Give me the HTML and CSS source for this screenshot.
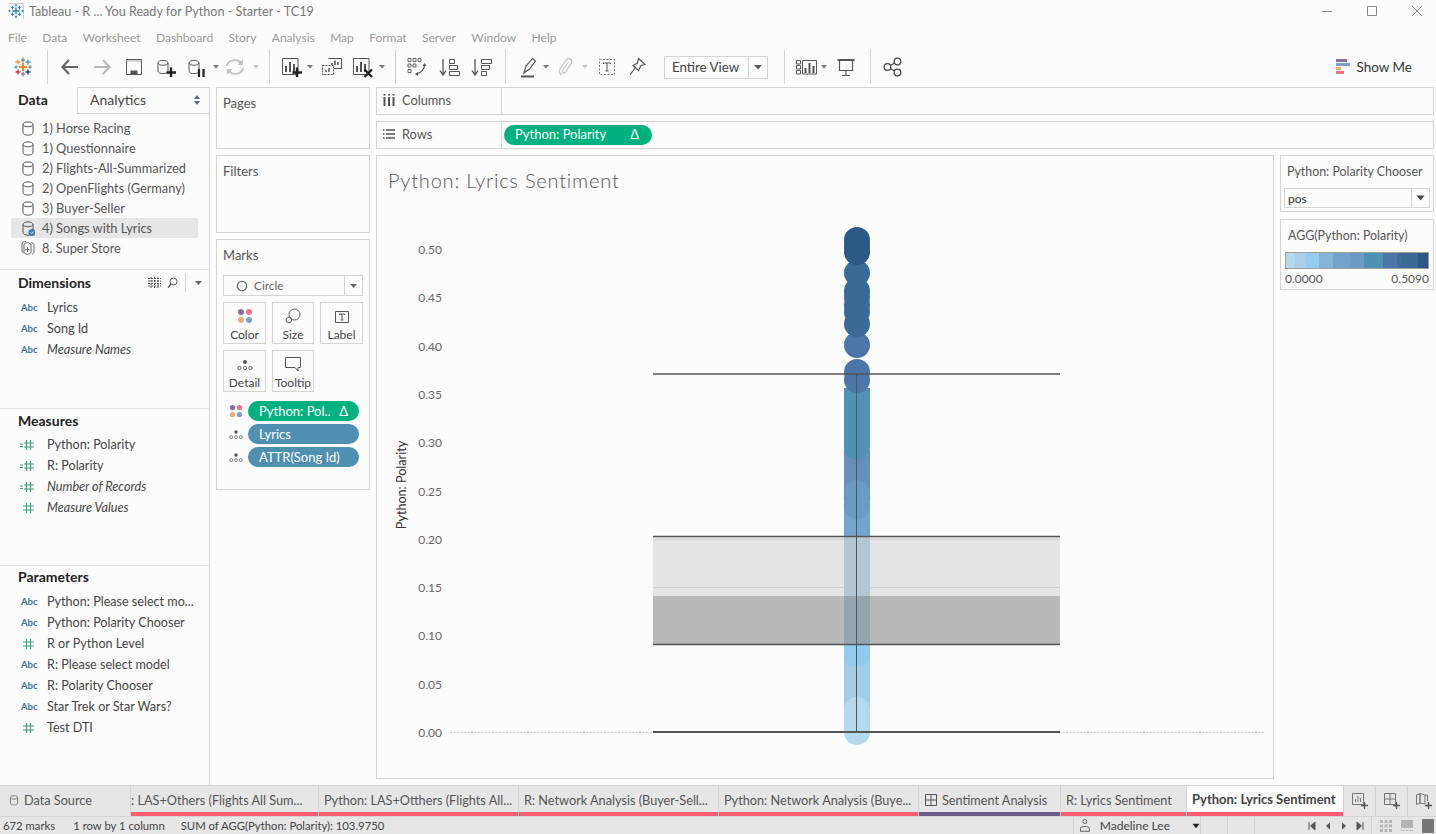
FILE: index.html
```html
<!DOCTYPE html>
<html lang="en">
<head>
    <meta charset="UTF-8">
    <title>Tableau - R ... You Ready for Python - Starter - TC19</title>
    <link rel="stylesheet" href="styles.css">
</head>
<body>
    <svg class="defs" width="0" height="0">
        <symbol id="i-db" viewBox="0 0 14 16">
            <path d="M2 4.500C2 1 12 1 12 4.500V12.500C12 16 2 16 2 12.500ZM2 4.500C2 7.500 12 7.500 12 4.500" fill="none" stroke="#555" stroke-width="1"/>
        </symbol>
        <symbol id="i-hash" viewBox="0 0 16 14">
            <path d="M6.500 2V12M10.500 2V12M3 5H14M3 9H14" fill="none" stroke="#3f9e7f" stroke-width="1.200"/>
        </symbol>
        <symbol id="i-mhash" viewBox="0 0 16 14">
            <path d="M6.500 2V12M10.500 2V12M4 5H14M4 9H14" fill="none" stroke="#3f9e7f" stroke-width="1.200"/>
            <path d="M0 6H3M0 8.500H3" fill="none" stroke="#3f9e7f" stroke-width="1"/>
        </symbol>
        <symbol id="i-detail" viewBox="0 0 16 12">
            <circle cx="8" cy="3" r="2" fill="#555"/>
            <circle cx="2.500" cy="9" r="1.700" fill="none" stroke="#555" stroke-width=".8"/>
            <circle cx="8" cy="9" r="1.700" fill="none" stroke="#555" stroke-width=".8"/>
            <circle cx="13.500" cy="9" r="1.700" fill="none" stroke="#555" stroke-width=".8"/>
        </symbol>
        <symbol id="i-dots" viewBox="0 0 16 16">
            <circle cx="4" cy="4" r="3" fill="#8b6c9e"/>
            <circle cx="12" cy="4" r="3" fill="#f56f85"/>
            <circle cx="4" cy="12" r="3" fill="#edae6c"/>
            <circle cx="12" cy="12" r="3" fill="#7f9fcb"/>
        </symbol>
        <symbol id="i-bars" viewBox="0 0 24 24">
            <path d="M3.500 3.500H19V19.500H3.500Z" fill="none" stroke="#555"/>
            <path d="M7 11V17M11 7V17M15 9V17" fill="none" stroke="#555" stroke-width="2"/>
        </symbol>
    </svg>

    <header class="titlebar">
        <svg class="app-icon" width="18" height="18" viewBox="0 0 18 18">
            <path d="M1.500 1.500H16.500V16.500" fill="none" stroke="#cfcfcf"/>
            <path d="M9 5.500V12.500M5.500 9H12.500" fill="none" stroke="#2f83b0" stroke-width="1.300"/>
            <path d="M5.500 4V7.500M3.800 5.700H7.200M12.500 4V7.500M10.800 5.700H14.200M5.500 10.500V14M3.800 12.300H7.200M12.500 10.500V14M10.800 12.300H14.200M9 2V4.500M7.800 3.200H10.200M9 13.500V16M7.800 14.800H10.200M2.500 7.800V10.200M1.300 9H3.700M15.500 7.800V10.200M14.300 9H16.700" fill="none" stroke="#2f83b0"/>
        </svg>
        <span class="app-title">Tableau - R ... You Ready for Python - Starter - TC19</span>
        <div class="win-btns">
            <svg width="12" height="12" viewBox="0 0 12 12"><path d="M1 6.500H11" stroke="#888"/></svg>
            <svg width="12" height="12" viewBox="0 0 12 12"><path d="M1.500 1.500H10.500V10.500H1.500Z" fill="none" stroke="#888"/></svg>
            <svg width="12" height="12" viewBox="0 0 12 12"><path d="M1 1L11 11M11 1L1 11" stroke="#888"/></svg>
        </div>
    </header>

    <nav class="menubar">
        <span>File</span><span>Data</span><span>Worksheet</span><span>Dashboard</span><span>Story</span><span>Analysis</span><span>Map</span><span>Format</span><span>Server</span><span>Window</span><span>Help</span>
    </nav>

    <div class="toolbar">
        <svg class="tool ml11" viewBox="0 0 24 24">
            <path d="M8 12H16M12 8V16" stroke="#ee8a2c" stroke-width="2"/>
            <path d="M12 2.500V7.500M10 5H14" stroke="#6f8ea8" stroke-width="1.300"/>
            <path d="M7 4.500V9.500M4.500 7H9.500" stroke="#ee9a3c" stroke-width="1.300"/>
            <path d="M17 4.500V9.500M14.500 7H19.500" stroke="#4e92c4" stroke-width="1.300"/>
            <path d="M5 10.500V13.500M3.500 12H6.500" stroke="#4e92c4" stroke-width="1.300"/>
            <path d="M19 10.500V13.500M17.500 12H20.500" stroke="#6f7f9c" stroke-width="1.300"/>
            <path d="M7 14.500V19.500M4.500 17H9.500" stroke="#d8344c" stroke-width="1.500"/>
            <path d="M12 16.500V21.500M10 19H14" stroke="#6f8ea8" stroke-width="1.300"/>
            <path d="M17 14.500V19.500M14.500 17H19.500" stroke="#1f4a78" stroke-width="1.500"/>
        </svg>
        <i class="sep ml12"></i>
        <svg class="tool ml10" viewBox="0 0 24 24"><path d="M4.500 12H20M11 5L4.500 12L11 19" fill="none" stroke="#666" stroke-width="2.200"/></svg>
        <svg class="tool ml8" viewBox="0 0 24 24"><path d="M4 12H19.500M13 5L19.500 12L13 19" fill="none" stroke="#bbb" stroke-width="2.200"/></svg>
        <svg class="tool ml8" viewBox="0 0 24 24"><path d="M4.500 4.500H19.500V19.500H4.500Z" fill="none" stroke="#555"/><path d="M4.500 6H19.500" stroke="#aaa"/><path d="M8.500 15.500H15.500V19.500H8.500Z" fill="#555"/></svg>
        <svg class="tool ml8" viewBox="0 0 24 24"><use href="#i-db" x="2" y="3" width="14" height="17"/><path d="M17 12.500V22M12.500 17.500H22" stroke="#222" stroke-width="2.400"/></svg>
        <svg class="tool ml6" viewBox="0 0 24 24"><use href="#i-db" x="3" y="3" width="14" height="17"/><path d="M15 14V22M19.500 14V22" stroke="#222" stroke-width="2.200"/></svg>
        <svg class="caret ml3" viewBox="0 0 10 6"><path d="M2 1H8L5 4.500Z" fill="#777"/></svg>
        <svg class="tool ml2" viewBox="0 0 24 24"><path d="M4 11C5 5 14 3 18 8M20 13C19 19 10 21 6 16" fill="none" stroke="#c4c4c4" stroke-width="2"/><path d="M20 4V10H14.500M4 20V14H9.500" fill="#c4c4c4"/></svg>
        <svg class="caret ml4" viewBox="0 0 10 6"><path d="M2 1H8L5 4.500Z" fill="#c4c4c4"/></svg>
        <i class="sep ml8"></i>
        <svg class="tool ml9" viewBox="0 0 24 24"><use href="#i-bars"/><path d="M18 12.500V22M13.500 17.500H23" stroke="#222" stroke-width="2.400"/></svg>
        <svg class="caret ml2" viewBox="0 0 10 6"><path d="M2 1H8L5 4.500Z" fill="#777"/></svg>
        <svg class="tool ml5" viewBox="0 0 24 24"><path d="M8.500 3.500H21.500V13.500H14" fill="#fcfcfc" stroke="#555"/><path d="M12 10V8M15 10V5.500M18 10V7" stroke="#555" stroke-width="1.600"/><path d="M2.500 10.500H13.500V19.500H2.500Z" fill="none" stroke="#555" stroke-dasharray="2 1"/><path d="M6 17V15M9 17V13" stroke="#555" stroke-width="1.500"/></svg>
        <svg class="tool ml6" viewBox="0 0 24 24"><use href="#i-bars"/><path d="M14.500 14.500L22 22M22 14.500L14.500 22" stroke="#222" stroke-width="2.400"/></svg>
        <svg class="caret ml3" viewBox="0 0 10 6"><path d="M2 1H8L5 4.500Z" fill="#777"/></svg>
        <i class="sep ml8"></i>
        <svg class="tool ml9" viewBox="0 0 24 24"><path d="M3 3.500H6V6.500H3ZM8 3.500H11V6.500H8ZM13 3.500H16V6.500H13ZM3 9H6V12H3ZM3 14.500H6V17.500H3ZM8 9H11V12H8Z" fill="none" stroke="#555" stroke-width=".9"/><path d="M19.500 9C20 14 16 18.500 11 19" fill="none" stroke="#555" stroke-width="1.100"/><path d="M17.500 11L19.500 8L21.500 11ZM13 17L10 19L13 21Z" fill="#555"/></svg>
        <svg class="tool ml8" viewBox="0 0 24 24"><path d="M6 4V19M3 15.500L6 20L9 15.500" fill="none" stroke="#555" stroke-width="1.300"/><path d="M12.500 4.500H17.500V8.500H12.500ZM12.500 10.500H20.500V14.500H12.500ZM12.500 16.500H22.500V20.500H12.500Z" fill="none" stroke="#555"/></svg>
        <svg class="tool ml8" viewBox="0 0 24 24"><path d="M6 4V19M3 15.500L6 20L9 15.500" fill="none" stroke="#555" stroke-width="1.300"/><path d="M12.500 4.500H22.500V8.500H12.500ZM12.500 10.500H20.500V14.500H12.500ZM12.500 16.500H17.500V20.500H12.500Z" fill="none" stroke="#555"/></svg>
        <i class="sep ml12"></i>
        <svg class="tool ml11" viewBox="0 0 24 24"><path d="M7 18L9 11L15.500 3.500L18.500 6L12.500 14Z" fill="none" stroke="#555" stroke-width="1.200"/><path d="M4 21.500H17" stroke="#555" stroke-width="2"/></svg>
        <svg class="caret" viewBox="0 0 10 6"><path d="M2 1H8L5 4.500Z" fill="#777"/></svg>
        <svg class="tool ml2" viewBox="0 0 24 24"><path d="M9 20C6 19 6 16 7 14L13 5C15 2 20 4 18.500 8L12.500 17C11 19 8.500 17.500 9.500 15.500L14.500 8" fill="none" stroke="#c4c4c4" stroke-width="1.300"/></svg>
        <svg class="caret ml3" viewBox="0 0 10 6"><path d="M2 1H8L5 4.500Z" fill="#c4c4c4"/></svg>
        <svg class="tool ml5" viewBox="0 0 24 24"><path d="M4.500 4.500H19.500V19.500H4.500Z" fill="none" stroke="#777" stroke-dasharray="2 1.500"/><path d="M8.500 9V8H15.500V9M12 8V16M10.500 16H13.500" fill="none" stroke="#555"/></svg>
        <svg class="tool ml6" viewBox="0 0 24 24"><path d="M13.500 3.500L20 9.500L16 10.500L13.500 15.500L8 10.500L12.500 8ZM10 13L5 20" fill="none" stroke="#555" stroke-width="1.200"/></svg>
        <div class="view-select ml15"><span>Entire View</span><b><svg width="10" height="6" viewBox="0 0 10 6"><path d="M1 1H9L5 5.500Z" fill="#555"/></svg></b></div>
        <i class="sep ml16"></i>
        <svg class="tool ml10" viewBox="0 0 24 24"><path d="M1.500 5.500H5.500V9H1.500ZM1.500 10.500H5.500V14H1.500ZM1.500 15.500H5.500V19H1.500ZM7.500 5.500H21.500V19H7.500Z" fill="none" stroke="#555"/><path d="M10.500 18V13M14.500 18V8M18.500 18V11" stroke="#555" stroke-width="2"/></svg>
        <svg class="caret" viewBox="0 0 10 6"><path d="M2 1H8L5 4.500Z" fill="#777"/></svg>
        <svg class="tool ml5" viewBox="0 0 24 24"><path d="M4 5.500H20M5.500 5.500V15.500H18.500V5.500M12 15.500V20.500M8 20.500H16" fill="none" stroke="#555" stroke-width="1.200"/><path d="M3.500 5H20.500" stroke="#555" stroke-width="2"/></svg>
        <i class="sep ml12"></i>
        <svg class="tool ml10" viewBox="0 0 24 24"><circle cx="6.500" cy="12" r="3.300" fill="none" stroke="#444" stroke-width="1.300"/><circle cx="16.500" cy="6.500" r="3.300" fill="none" stroke="#444" stroke-width="1.300"/><circle cx="16.500" cy="17.500" r="3.300" fill="none" stroke="#444" stroke-width="1.300"/><path d="M9.500 10.500L13.500 8M9.500 13.500L13.500 16" stroke="#444" stroke-width="1.300"/></svg>
        <div class="show-me">
            <svg width="14" height="16" viewBox="0 0 14 16"><path d="M0 0H11V3H0Z" fill="#8b6c9e"/><path d="M0 4H14V7H0Z" fill="#7f9fcb"/><path d="M0 8H5V11H0Z" fill="#edae6c"/><path d="M0 12H8V15H0Z" fill="#f56f85"/></svg>
            <span>Show Me</span>
        </div>
    </div>

    <main class="workspace">
        <aside class="sidebar">
            <div class="side-tabs">
                <div class="side-tab active">Data</div>
                <div class="side-tab">Analytics
                    <svg class="updown" width="8" height="12" viewBox="0 0 8 12"><path d="M4 1L7 5H1ZM4 11L1 7H7Z" fill="#5a6b80"/></svg>
                </div>
            </div>
            <ul class="sources">
                <li><svg class="src-ico" viewBox="0 0 14 16"><use href="#i-db"/></svg>1) Horse Racing</li>
                <li><svg class="src-ico" viewBox="0 0 14 16"><use href="#i-db"/></svg>1) Questionnaire</li>
                <li><svg class="src-ico" viewBox="0 0 14 16"><use href="#i-db"/></svg>2) Flights-All-Summarized</li>
                <li><svg class="src-ico" viewBox="0 0 14 16"><use href="#i-db"/></svg>2) OpenFlights (Germany)</li>
                <li><svg class="src-ico" viewBox="0 0 14 16"><use href="#i-db"/></svg>3) Buyer-Seller</li>
                <li class="selected"><svg class="src-ico" viewBox="0 0 14 16"><use href="#i-db"/><circle cx="11" cy="12.500" r="3.500" fill="#3b7bb0"/><path d="M9.500 12.500L10.700 13.700L12.700 11.500" fill="none" stroke="#fff"/></svg>4) Songs with Lyrics</li>
                <li><svg class="src-ico" viewBox="0 0 14 16"><path d="M3 5C3 2 10 2 10 5V12C10 15 3 15 3 12ZM1 4C1 2 3 1.500 5 1.500M1 4V11C1 12 1.500 12.500 2.500 13M13 5C13 3.500 12 3 10.500 2.500M13 5V12C13 13 12 14 11 14.500M6.500 7V12M4.500 9.500H8.500" fill="none" stroke="#555" stroke-width=".9"/></svg>8. Super Store</li>
            </ul>

            <section class="field-group dims">
                <h3>Dimensions
                    <span class="head-tools">
                        <svg class="grid-ico" width="13" height="11" viewBox="0 0 13 11"><path d="M0 1.500H13M0 4H13M0 6.500H13M0 9H13M3 0V11M6.500 0V11M10 0V11" stroke="#555" stroke-dasharray="2 1" fill="none"/></svg>
                        <svg width="11" height="11" viewBox="0 0 11 11"><circle cx="6.500" cy="4.500" r="3.500" fill="none" stroke="#555"/><path d="M4 7L1 10.500" stroke="#555" stroke-width="1.300"/></svg>
                        <i class="head-sep"></i>
                        <svg width="9" height="6" viewBox="0 0 9 6"><path d="M1 1H8L4.500 5Z" fill="#666"/></svg>
                    </span>
                </h3>
                <div class="field"><span class="abc">Abc</span>Lyrics</div>
                <div class="field"><span class="abc">Abc</span>Song Id</div>
                <div class="field calc"><span class="abc">Abc</span>Measure Names</div>
            </section>

            <section class="field-group meas">
                <h3>Measures</h3>
                <div class="field"><svg class="num" viewBox="0 0 16 14"><use href="#i-mhash"/></svg>Python: Polarity</div>
                <div class="field"><svg class="num" viewBox="0 0 16 14"><use href="#i-mhash"/></svg>R: Polarity</div>
                <div class="field calc"><svg class="num" viewBox="0 0 16 14"><use href="#i-mhash"/></svg>Number of Records</div>
                <div class="field calc"><svg class="num" viewBox="0 0 16 14"><use href="#i-hash"/></svg>Measure Values</div>
            </section>

            <section class="field-group params">
                <h3>Parameters</h3>
                <div class="field"><span class="abc">Abc</span>Python: Please select mo...</div>
                <div class="field"><span class="abc">Abc</span>Python: Polarity Chooser</div>
                <div class="field"><svg class="num" viewBox="0 0 16 14"><use href="#i-hash"/></svg>R or Python Level</div>
                <div class="field"><span class="abc">Abc</span>R: Please select model</div>
                <div class="field"><span class="abc">Abc</span>R: Polarity Chooser</div>
                <div class="field"><span class="abc">Abc</span>Star Trek or Star Wars?</div>
                <div class="field"><svg class="num" viewBox="0 0 16 14"><use href="#i-hash"/></svg>Test DTI</div>
            </section>
        </aside>

        <div class="cards-col">
            <div class="card pages">Pages</div>
            <div class="card filters">Filters</div>
            <div class="card marks">
                <div class="marks-title">Marks</div>
                <div class="mark-type">
                    <svg width="12" height="12" viewBox="0 0 12 12"><circle cx="6" cy="6" r="4.700" fill="none" stroke="#555" stroke-width="1.100"/></svg>
                    <span>Circle</span>
                    <b><svg width="9" height="6" viewBox="0 0 9 6"><path d="M1 1H8L4.500 5Z" fill="#666"/></svg></b>
                </div>
                <div class="mark-btns">
                    <div class="mark-btn"><svg width="16" height="16"><use href="#i-dots"/></svg>Color</div>
                    <div class="mark-btn"><svg width="16" height="16" viewBox="0 0 16 16"><circle cx="9.500" cy="6.500" r="5.500" fill="none" stroke="#555"/><circle cx="3.800" cy="12" r="2.800" fill="#fcfcfc" stroke="#555"/></svg>Size</div>
                    <div class="mark-btn"><svg width="14" height="14" viewBox="0 0 14 14"><path d="M.5 1.500H13.500V12.500H.5Z" fill="none" stroke="#555"/><path d="M4.500 5V4H9.500V5M7 4V10M5.500 10H8.500" fill="none" stroke="#555"/></svg>Label</div>
                    <div class="mark-btn"><svg width="16" height="14" viewBox="0 0 16 14"><use href="#i-detail" y="1" width="16" height="12"/></svg>Detail</div>
                    <div class="mark-btn"><svg width="16" height="16" viewBox="0 0 16 16"><path d="M.5 1.500H15.500V11.500H13V15L10 11.500H.5Z" fill="none" stroke="#555"/></svg>Tooltip</div>
                </div>
                <div class="mark-pill">
                    <svg width="14" height="14"><use href="#i-dots" width="14" height="14"/></svg>
                    <div class="pill green"><span>Python: Pol..</span><em>&#916;</em></div>
                </div>
                <div class="mark-pill">
                    <svg width="14" height="11"><use href="#i-detail" width="14" height="11"/></svg>
                    <div class="pill blue"><span>Lyrics</span></div>
                </div>
                <div class="mark-pill">
                    <svg width="14" height="11"><use href="#i-detail" width="14" height="11"/></svg>
                    <div class="pill blue"><span>ATTR(Song Id)</span></div>
                </div>
            </div>
        </div>

        <div class="view-col">
            <div class="shelf">
                <div class="shelf-label">
                    <svg width="12" height="12" viewBox="0 0 12 12"><path d="M1.500 3V12M6 3V12M10.500 3V12M1.500 0V1.500M6 0V1.500M10.500 0V1.500" stroke="#555" stroke-width="2"/></svg>
                    Columns
                </div>
                <div class="shelf-body"></div>
            </div>
            <div class="shelf">
                <div class="shelf-label">
                    <svg width="12" height="12" viewBox="0 0 12 12"><path d="M3 2H12M3 6H12M3 10H12M0 2H1.500M0 6H1.500M0 10H1.500" stroke="#555" stroke-width="1.500"/></svg>
                    Rows
                </div>
                <div class="shelf-body"><div class="pill green row-pill"><span>Python: Polarity</span><em>&#916;</em></div></div>
            </div>

            <div class="view-body">
                <div class="card chart-card">
                    <div class="chart-title">Python: Lyrics Sentiment</div>
                    <svg class="chart" width="896" height="574" viewBox="377 204 896 574">
                        <g class="ticks">
                            <text x="442" y="254">0.50</text>
                            <text x="442" y="302">0.45</text>
                            <text x="442" y="351">0.40</text>
                            <text x="442" y="399">0.35</text>
                            <text x="442" y="447">0.30</text>
                            <text x="442" y="496">0.25</text>
                            <text x="442" y="544">0.20</text>
                            <text x="442" y="592">0.15</text>
                            <text x="442" y="640">0.10</text>
                            <text x="442" y="689">0.05</text>
                            <text x="442" y="737">0.00</text>
                        </g>
                        <text class="axis-label" transform="translate(406 485) rotate(-90)">Python: Polarity</text>
                        <path d="M450 732.500H1264" stroke="#ccc" stroke-dasharray="2 1.500"/>

                        <!-- reference bands -->
                        <rect x="653" y="536" width="407" height="60" fill="#e5e5e5"/>
                        <rect x="653" y="596" width="407" height="48" fill="#b9b9b9"/>
                        <path d="M653 539.500H1060M653 587.500H1060" stroke="#d0d0d0"/>

                        <!-- marks, bottom of the axis first -->
                        <rect x="844" y="536" width="26" height="60" fill="#b3c6d3"/>
                        <rect x="844" y="596" width="26" height="48" fill="#95a5af"/>
                        <rect x="844" y="644" width="26" height="66" fill="#a3cce6"/>
                        <path d="M844 644H870V655A13 13 0 0 1 844 655Z" fill="#91cbee"/>
                        <circle cx="857" cy="679" r="13" fill="#a3cce6"/>
                        <rect x="844" y="710" width="26" height="22" fill="#b5daf0"/>
                        <circle cx="857" cy="710" r="13" fill="#b5daf0"/>
                        <circle cx="857" cy="732" r="13" fill="#b5daf0"/>

                        <rect x="844" y="500" width="26" height="36" fill="#74a5cf"/>
                        <rect x="844" y="450" width="26" height="50" fill="#6690b8"/>
                        <circle cx="857" cy="493" r="13" fill="#6b9ac4"/>
                        <circle cx="857" cy="506" r="13" fill="#6b9ac4"/>
                        <rect x="844" y="388" width="26" height="59" fill="#4f92b4"/>
                        <circle cx="857" cy="447" r="13" fill="#4f92b4"/>
                        <circle cx="857" cy="372" r="13" fill="#4b76a7"/>
                        <circle cx="857" cy="380" r="13" fill="#4b76a7"/>
                        <circle cx="857" cy="345" r="13" fill="#4b76a7"/>
                        <circle cx="857" cy="273" r="13" fill="#3a6b96"/>
                        <circle cx="857" cy="291" r="13" fill="#3a6b96"/>
                        <circle cx="857" cy="297" r="13" fill="#3a6b96"/>
                        <circle cx="857" cy="305" r="13" fill="#3a6b96"/>
                        <circle cx="857" cy="312" r="13" fill="#3a6b96"/>
                        <circle cx="857" cy="324" r="13" fill="#3a6b96"/>
                        <circle cx="857" cy="240" r="13" fill="#2b5a87"/>
                        <circle cx="857" cy="246" r="13" fill="#2b5a87"/>
                        <circle cx="857" cy="252" r="13" fill="#2b5a87"/>

                        <!-- box plot lines -->
                        <path d="M856.500 374V732" stroke="#555"/>
                        <path d="M653 374H1060" stroke="#555" stroke-width="1.600"/>
                        <path d="M653 536.500H1060M653 644.500H1060" stroke="#555" stroke-width="1.300"/>
                        <path d="M653 732H1060" stroke="#555" stroke-width="2"/>
                    </svg>
                </div>

                <div class="legend-col">
                    <div class="card chooser">
                        <div class="legend-title">Python: Polarity Chooser</div>
                        <div class="param-select">
                            <span>pos</span>
                            <b><svg width="9" height="6" viewBox="0 0 9 6"><path d="M.5 .5H8.500L4.500 5.500Z" fill="#444"/></svg></b>
                        </div>
                    </div>
                    <div class="card color-legend">
                        <div class="legend-title">AGG(Python: Polarity)</div>
                        <div class="ramp"></div>
                        <div class="ramp-labels"><span>0.0000</span><span>0.5090</span></div>
                    </div>
                </div>
            </div>
        </div>
    </main>

    <div class="tabbar">
        <div class="tab source">
            <svg width="10" height="14" viewBox="0 0 14 16"><use href="#i-db"/></svg>
            Data Source
        </div>
        <div class="tab w187 clip"><span>: LAS+Others (Flights All Sum...</span></div>
        <div class="tab w200"><span>Python: LAS+Otthers (Flights All...</span></div>
        <div class="tab w200"><span>R: Network Analysis (Buyer-Sell...</span></div>
        <div class="tab w200"><span>Python: Network Analysis (Buye...</span></div>
        <div class="tab w142 dash">
            <svg width="12" height="12" viewBox="0 0 12 12"><path d="M.5 .5H11.500V11.500H.5ZM6 .5V11.500M.5 6H11.500" fill="none" stroke="#555"/></svg>
            <span>Sentiment Analysis</span>
        </div>
        <div class="tab w126"><span>R: Lyrics Sentiment</span></div>
        <div class="tab w157 current"><span>Python: Lyrics Sentiment</span></div>
        <div class="tab-add"><svg width="18" height="18" viewBox="0 0 18 18"><path d="M1.500 1.500H12.500V12.500H1.500Z" fill="none" stroke="#777"/><path d="M4.500 10V7M7 10V4M9.500 10V6" stroke="#777"/><path d="M13.500 10V17M10 13.500H17" stroke="#555" stroke-width="1.400"/></svg></div>
        <div class="tab-add"><svg width="18" height="18" viewBox="0 0 18 18"><path d="M1.500 1.500H12.500V12.500H1.500ZM7 1.500V12.500M1.500 7H12.500" fill="none" stroke="#777"/><path d="M13.500 10V17M10 13.500H17" stroke="#555" stroke-width="1.400"/></svg></div>
        <div class="tab-add"><svg width="18" height="18" viewBox="0 0 18 18"><path d="M1.500 3L5 1.500V11L1.500 12.500ZM5 1.500L10 3V12L5 11ZM10 3H12.500V9" fill="none" stroke="#777"/><path d="M13.500 10V17M10 13.500H17" stroke="#555" stroke-width="1.400"/></svg></div>
    </div>

    <footer class="statusbar">
        <span class="stat s1">672 marks</span>
        <span class="stat s2">1 row by 1 column</span>
        <span class="stat">SUM of AGG(Python: Polarity): 103.9750</span>
        <div class="status-right">
            <div class="user">
                <svg width="11" height="15" viewBox="0 0 11 15"><circle cx="5.500" cy="3" r="2.300" fill="none" stroke="#555"/><path d="M.5 14V10.500C.5 8 10.500 8 10.500 10.500V14Z" fill="none" stroke="#555"/></svg>
                <span>Madeline Lee</span>
                <svg class="user-caret" width="9" height="6" viewBox="0 0 9 6"><path d="M.5 .5H8.500L4.500 5.500Z" fill="#222"/></svg>
            </div>
            <i class="st-cell"></i>
            <i class="st-cell"></i>
            <div class="pager">
                <svg width="8" height="10" viewBox="0 0 8 10"><path d="M1 1V9M7 1V9L2.500 5Z" stroke="#555" fill="#555"/></svg>
                <svg width="8" height="10" viewBox="0 0 8 10"><path d="M6 1.500V8.500L2 5Z" fill="#555"/></svg>
                <svg width="8" height="10" viewBox="0 0 8 10"><path d="M2 1.500V8.500L6 5Z" fill="#555"/></svg>
                <svg width="8" height="10" viewBox="0 0 8 10"><path d="M7 1V9M1 1V9L5.500 5Z" stroke="#555" fill="#555"/></svg>
            </div>
            <div class="zoomers">
                <svg width="12" height="12" viewBox="0 0 12 12"><path d="M0 1.500H12M0 6H12M0 10.500H12" stroke="#b5b5b5" stroke-width="3" stroke-dasharray="3 1.500"/></svg>
                <svg width="12" height="12" viewBox="0 0 12 12"><path d="M0 0H12V8H0Z" fill="#b5b5b5"/><path d="M0 10.500H12" stroke="#b5b5b5" stroke-dasharray="3 1.500"/></svg>
                <svg width="12" height="14" viewBox="0 0 12 14"><path d="M0 0H12V14H0Z" fill="#777"/></svg>
            </div>
        </div>
    </footer>
</body>
</html>
```

FILE: styles.css
```css
* {
    box-sizing: border-box;
}
html, body {
    height: 100%;
}
body {
    margin: 0;
    width: 1436px;
    height: 834px;
    overflow: hidden;
    display: flex;
    flex-direction: column;
    background: #fcfcfc;
    color: #333;
    font-family: Lato, "Open Sans", sans-serif;
    font-size: 13px;
}
.defs {
    position: absolute;
}
h3 {
    margin: 0;
}

/* window chrome */
.titlebar {
    height: 22px;
    display: flex;
    align-items: center;
    padding-left: 7px;
    flex: none;
}
.app-icon {
    margin-right: 4px;
}
.app-title {
    color: #777;
    font-size: 12.6px;
}
.win-btns {
    margin-left: auto;
    display: flex;
    gap: 33px;
    padding-right: 13px;
}
.menubar {
    height: 26px;
    display: flex;
    align-items: center;
    gap: 15.4px;
    padding: 4px 0 0 8px;
    color: #9a9a9a;
    font-size: 12px;
    flex: none;
}

/* toolbar */
.toolbar {
    height: 39px;
    display: flex;
    align-items: center;
    padding-bottom: 1px;
    flex: none;
}
.tool {
    width: 24px;
    height: 24px;
    flex: none;
}
.caret {
    width: 10px;
    height: 6px;
    flex: none;
}
.sep {
    width: 1px;
    height: 34px;
    background: #d4d4d4;
    flex: none;
}
.ml2 { margin-left: 2px; }
.ml3 { margin-left: 3px; }
.ml4 { margin-left: 4px; }
.ml5 { margin-left: 5px; }
.ml6 { margin-left: 6px; }
.ml8 { margin-left: 8px; }
.ml9 { margin-left: 9px; }
.ml10 { margin-left: 10px; }
.ml11 { margin-left: 11px; }
.ml12 { margin-left: 12px; }
.ml15 { margin-left: 15px; }
.ml16 { margin-left: 16px; }
.view-select {
    width: 104px;
    height: 23px;
    border: 1px solid #d4d4d4;
    display: flex;
    align-items: center;
    padding-left: 7px;
    font-size: 13.3px;
    color: #444;
    flex: none;
}
.view-select span {
    padding-bottom: 1px;
}
.view-select b {
    margin-left: auto;
    width: 19px;
    height: 100%;
    border-left: 1px solid #d4d4d4;
    display: flex;
    align-items: center;
    justify-content: center;
}
.show-me {
    margin-left: auto;
    padding-right: 24px;
    display: flex;
    align-items: center;
    gap: 6px;
    font-size: 13.5px;
}

/* main area */
.workspace {
    flex: 1;
    min-height: 0;
    display: flex;
}
.sidebar {
    width: 210px;
    border-right: 1px solid #d4d4d4;
    display: flex;
    flex-direction: column;
    flex: none;
}
.side-tabs {
    height: 27px;
    display: flex;
    flex: none;
}
.side-tab {
    display: flex;
    align-items: center;
    font-size: 14px;
    color: #444;
    flex: 1;
    padding: 0 0 2px 12px;
    border-left: 1px solid #d4d4d4;
    border-top: 1px solid #d4d4d4;
    border-bottom: 1px solid #d4d4d4;
}
.side-tab.active {
    flex: 0 0 77px;
    padding-left: 18px;
    font-weight: 700;
    color: #222;
    border: 0;
}
.updown {
    margin-left: auto;
    margin-right: 8px;
}
.sources {
    list-style: none;
    margin: 0;
    padding: 4px 0 0 11px;
    height: 155px;
    flex: none;
}
.sources li {
    width: 187px;
    height: 20px;
    display: flex;
    align-items: center;
    color: #555;
    font-size: 12.8px;
}
.sources li.selected {
    background: #e6e6e6;
}
.src-ico {
    width: 14px;
    height: 16px;
    margin: 0 7px 0 10px;
    flex: none;
}
.field-group {
    border-top: 1px solid #e4e4e4;
    flex: none;
}
.field-group h3 {
    display: flex;
    align-items: center;
    padding-left: 18px;
    font-size: 14px;
    font-weight: 700;
    color: #222;
}
.dims {
    height: 139px;
}
.dims h3 {
    height: 27px;
    padding-bottom: 2px;
}
.meas {
    height: 157px;
}
.meas h3 {
    height: 25px;
    padding-bottom: 2px;
}
.params h3 {
    height: 25px;
    padding-bottom: 4px;
}
.head-tools {
    margin-left: auto;
    display: flex;
    align-items: center;
    gap: 7px;
    padding-right: 6px;
}
.grid-ico {
    margin-right: -1px;
}
.head-sep {
    width: 1px;
    height: 18px;
    background: #d4d4d4;
    margin-right: 1px;
}
.field {
    height: 21px;
    display: flex;
    align-items: center;
    color: #444;
    font-size: 12.6px;
}
.field.calc {
    font-style: italic;
}
.abc {
    width: 47px;
    padding-left: 21px;
    color: #3d7199;
    font-size: 9.5px;
    font-weight: 700;
    font-style: normal;
    flex: none;
}
.num {
    width: 16px;
    height: 14px;
    margin: 0 11px 0 20px;
    flex: none;
}

/* pages, filters, marks */
.cards-col {
    width: 154px;
    margin-left: 6px;
    display: flex;
    flex-direction: column;
    gap: 6px;
    flex: none;
}
.card {
    border: 1px solid #d4d4d4;
    background: #fcfcfc;
}
.pages {
    height: 62px;
    padding: 7px 6px;
    color: #555;
}
.filters {
    height: 78px;
    padding: 7px 6px;
    color: #555;
}
.marks {
    height: 251px;
    padding: 0 6px;
}
.marks-title {
    height: 35px;
    padding-top: 7px;
    color: #555;
}
.mark-type {
    height: 21px;
    border: 1px solid #d4d4d4;
    display: flex;
    align-items: center;
    padding-left: 12px;
    color: #666;
    font-size: 11.8px;
}
.mark-type span {
    margin-left: 6px;
}
.mark-type b {
    margin-left: auto;
    width: 18px;
    height: 100%;
    border-left: 1px solid #d4d4d4;
    display: flex;
    align-items: center;
    justify-content: center;
}
.mark-btns {
    display: grid;
    grid-template-columns: 43px 42px 43px;
    grid-auto-rows: 42px;
    gap: 6px;
    margin: 6px 0 9px;
}
.mark-btn {
    border: 1px solid #d4d4d4;
    display: flex;
    flex-direction: column;
    align-items: center;
    justify-content: flex-end;
    gap: 3px;
    padding-bottom: 1px;
    font-size: 12px;
    color: #444;
}
.mark-pill {
    display: flex;
    align-items: center;
    justify-content: space-between;
    height: 20px;
    margin-bottom: 3px;
    padding-left: 6px;
    margin-right: 4px;
}
.pill {
    height: 20px;
    width: 111px;
    border-radius: 10px;
    display: flex;
    align-items: center;
    padding: 0 11px;
    color: #fff;
    font-size: 13px;
}
.pill em {
    margin-left: auto;
    font-style: normal;
    font-size: 13px;
}
.green {
    background: #00b180;
}
.blue {
    background: #4f90b2;
}

/* shelves and view */
.view-col {
    flex: 1;
    min-width: 0;
    margin: 0 2px 0 6px;
    display: flex;
    flex-direction: column;
    gap: 6px;
    padding-bottom: 6px;
}
.shelf {
    height: 28px;
    display: flex;
    border: 1px solid #d4d4d4;
    flex: none;
}
.shelf-label {
    width: 125px;
    border-right: 1px solid #d4d4d4;
    display: flex;
    align-items: center;
    gap: 7px;
    padding: 0 0 2px 6px;
    color: #555;
    font-size: 12.8px;
}
.shelf-body {
    flex: 1;
    display: flex;
    align-items: center;
    padding-left: 2px;
}
.row-pill {
    width: 148px;
    padding: 0 13px 2px 11px;
}
.view-body {
    flex: 1;
    min-height: 0;
    display: flex;
    gap: 6px;
}
.chart-card {
    width: 898px;
    flex: none;
}
.chart-title {
    height: 48px;
    display: flex;
    align-items: center;
    padding-left: 11px;
    font-size: 20px;
    font-weight: 300;
    letter-spacing: .8px;
    color: #555;
}
.chart {
    display: block;
}
.ticks text {
    font-size: 12px;
    fill: #666;
    text-anchor: end;
}
.axis-label {
    font-size: 12.6px;
    fill: #333;
    text-anchor: middle;
}
.legend-col {
    flex: 1;
    display: flex;
    flex-direction: column;
    gap: 7px;
}
.chooser {
    height: 57px;
    padding: 0 3px;
}
.legend-title {
    height: 32px;
    display: flex;
    align-items: center;
    padding: 0 0 2px 3px;
    font-size: 12.4px;
    color: #555;
}
.param-select {
    height: 20px;
    border: 1px solid #d4d4d4;
    display: flex;
    align-items: center;
    padding-left: 3px;
    font-size: 12px;
}
.param-select b {
    margin-left: auto;
    width: 18px;
    height: 100%;
    border-left: 1px solid #d4d4d4;
    display: flex;
    align-items: center;
    justify-content: center;
}
.color-legend {
    height: 71px;
    padding: 0 4px;
}
.ramp {
    height: 17px;
    border: 1px solid #a09f95;
    background: linear-gradient(90deg,
        #b5d8ef 0 6%, #a9d0e8 6% 14%, #95cbee 14% 23%, #86b3d8 23% 33%,
        #73a3cb 33% 45%, #6b9ac4 45% 55%, #4f92b4 55% 68%, #4b76a7 68% 78%,
        #456b9a 78% 81%, #3a6b96 81% 93%, #2b5a87 93% 100%);
}
.ramp-labels {
    display: flex;
    justify-content: space-between;
    font-size: 12px;
    color: #555;
    margin-top: 2px;
}

/* sheet tabs */
.tabbar {
    height: 31px;
    display: flex;
    background: #e6e6e6;
    border-top: 1px solid #d4d4d4;
    flex: none;
    font-size: 12.7px;
    color: #555;
}
.tab {
    display: flex;
    align-items: center;
    white-space: nowrap;
    overflow: hidden;
    padding: 0 0 2px 5px;
    border-right: 1px solid #d4d4d4;
    box-shadow: inset 0 -4px 0 #f95d70;
    flex: none;
}
.tab.source {
    width: 131px;
    padding-left: 9px;
    gap: 5px;
    box-shadow: none;
}
.tab.clip {
    padding-left: 0;
}
.w187 { width: 188px; }
.w200 { width: 200px; }
.w142 { width: 142px; }
.w126 { width: 126px; }
.w157 { width: 157px; }
.tab.dash {
    gap: 5px;
    padding-left: 6px;
    box-shadow: inset 0 -4px 0 #6a5a87;
}
.tab.current {
    background: #fcfcfc;
    font-weight: 700;
    font-size: 13px;
    padding-bottom: 4px;
    color: #444;
}
.tab-add {
    width: 32px;
    display: flex;
    align-items: center;
    justify-content: center;
    border-right: 1px solid #d4d4d4;
    flex: none;
}

/* status bar */
.statusbar {
    height: 18px;
    background: #e6e6e6;
    border-top: 1px solid #d4d4d4;
    display: flex;
    align-items: center;
    padding-left: 3px;
    font-size: 11.3px;
    color: #444;
    flex: none;
}
.stat {
    white-space: nowrap;
}
.s1 {
    margin-right: 18px;
}
.s2 {
    margin-right: 16px;
}
.status-right {
    margin-left: auto;
    height: 100%;
    display: flex;
}
.user {
    width: 127px;
    border-left: 1px solid #d4d4d4;
    display: flex;
    align-items: center;
    padding-left: 6px;
    gap: 10px;
    white-space: nowrap;
    font-size: 12px;
}
.user-caret {
    margin-left: 12px;
}
.st-cell {
    width: 27px;
    border-left: 1px solid #d4d4d4;
}
.pager {
    width: 118px;
    border-left: 1px solid #d4d4d4;
    border-right: 1px solid #d4d4d4;
    display: flex;
    align-items: center;
    justify-content: flex-end;
    gap: 8px;
    padding-right: 7px;
}
.zoomers {
    width: 64px;
    display: flex;
    align-items: center;
    gap: 9px;
    padding-left: 8px;
}
```
